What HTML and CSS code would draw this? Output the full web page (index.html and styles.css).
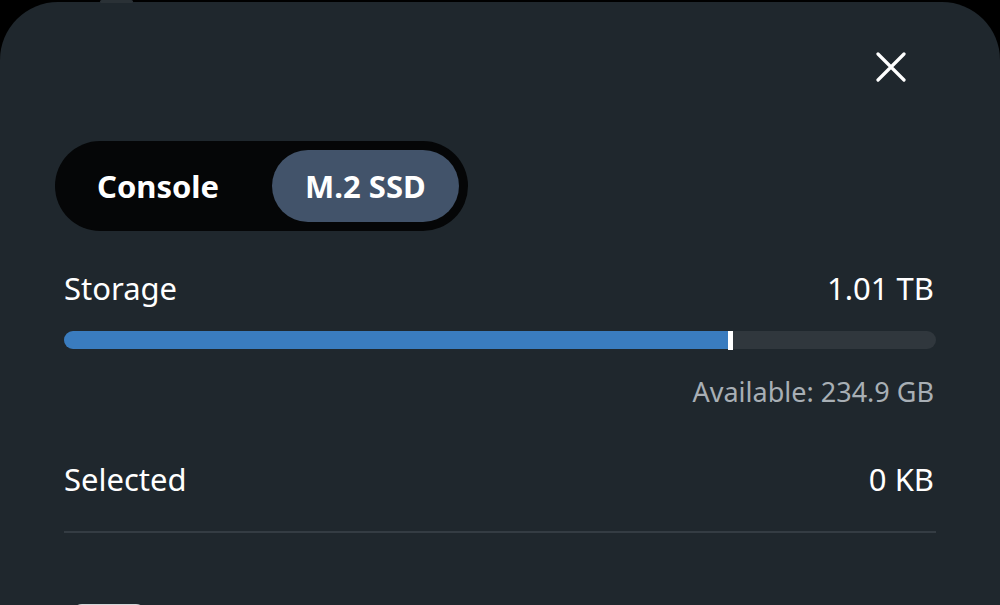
FILE: index.html
```html
<!DOCTYPE html>
<html lang="en">
<head>
<meta charset="utf-8">
<title>Storage</title>
<link rel="stylesheet" href="styles.css">
</head>
<body>
<div class="backdrop">
  <div class="peek-tab"></div>
  <section class="panel">
    <header class="panel-header">
      <button class="close-btn" aria-label="Close">
        <svg viewBox="0 0 30 30" width="30" height="30">
          <path d="M2 2 L28 28 M28 2 L2 28" stroke="#ffffff" stroke-width="3.2" stroke-linecap="round" fill="none"/>
        </svg>
      </button>
    </header>

    <div class="segmented">
      <span class="segment">Console</span>
      <span class="segment active">M.2 SSD</span>
    </div>

    <div class="row storage-row">
      <span class="label">Storage</span>
      <span class="value">1.01 TB</span>
    </div>

    <div class="bar">
      <div class="bar-fill" style="width: 76.1%"></div>
      <div class="bar-marker"></div>
    </div>

    <div class="available">Available: 234.9 GB</div>

    <div class="row selected-row">
      <span class="label">Selected</span>
      <span class="value">0 KB</span>
    </div>

    <hr class="divider">

    <div class="check-peek"></div>
  </section>
</div>
</body>
</html>
```

FILE: styles.css
```css
html, body {
  margin: 0;
  padding: 0;
  background: #000000;
  width: 1000px;
  height: 605px;
  overflow: hidden;
  font-family: "Noto Sans", "Open Sans", "DejaVu Sans", sans-serif;
  color: #ffffff;
}

.backdrop {
  position: relative;
  padding-top: 2px;
  height: 603px;
}

.peek-tab {
  position: absolute;
  left: 100px;
  top: 0;
  width: 33px;
  height: 3px;
  background: #2a3136;
  border-radius: 2px;
}

.panel {
  background: #1f272d;
  border-radius: 58px 58px 0 0;
  height: 603px;
  box-sizing: border-box;
  padding: 50px 64px 0 64px;
}

.panel-header {
  display: flex;
  justify-content: flex-end;
  padding-right: 30px;
  height: 30px;
}

.close-btn {
  width: 30px;
  height: 30px;
  padding: 0;
  border: 0;
  background: transparent;
  display: block;
}

.close-btn svg {
  display: block;
}

.segmented {
  margin-top: 59px;
  margin-left: -9px;
  display: inline-flex;
  gap: 20px;
  padding: 9px;
  background: #050607;
  border-radius: 45px;
}

.segment {
  display: flex;
  align-items: center;
  height: 72px;
  padding: 0 33px;
  border-radius: 36px;
  font-size: 31px;
  font-weight: 700;
  color: #ffffff;
}

.segment.active {
  background: #42536a;
}

.row {
  display: flex;
  justify-content: space-between;
  align-items: baseline;
  font-size: 31px;
  line-height: 40px;
}

.storage-row {
  margin-top: 37px;
}

.value {
  padding-right: 2px;
}

.bar {
  position: relative;
  margin-top: 23px;
  height: 18px;
  border-radius: 9px;
  background: #30373d;
  display: flex;
}

.bar-fill {
  background: #3a7cbf;
  border-radius: 9px 0 0 9px;
  height: 100%;
}

.bar-marker {
  width: 5px;
  height: 19px;
  background: #ffffff;
}

.available {
  margin-top: 26px;
  text-align: right;
  padding-right: 2px;
  font-size: 27px;
  line-height: 34px;
  color: #a8afb5;
}

.selected-row {
  margin-top: 50px;
}

.divider {
  margin: 32px 0 0 0;
  border: 0;
  height: 2px;
  background: #343c43;
}

.check-peek {
  margin-top: 71px;
  margin-left: 8px;
  width: 74px;
  height: 20px;
  border-radius: 10px;
  background: #d4d6d8;
}
```
